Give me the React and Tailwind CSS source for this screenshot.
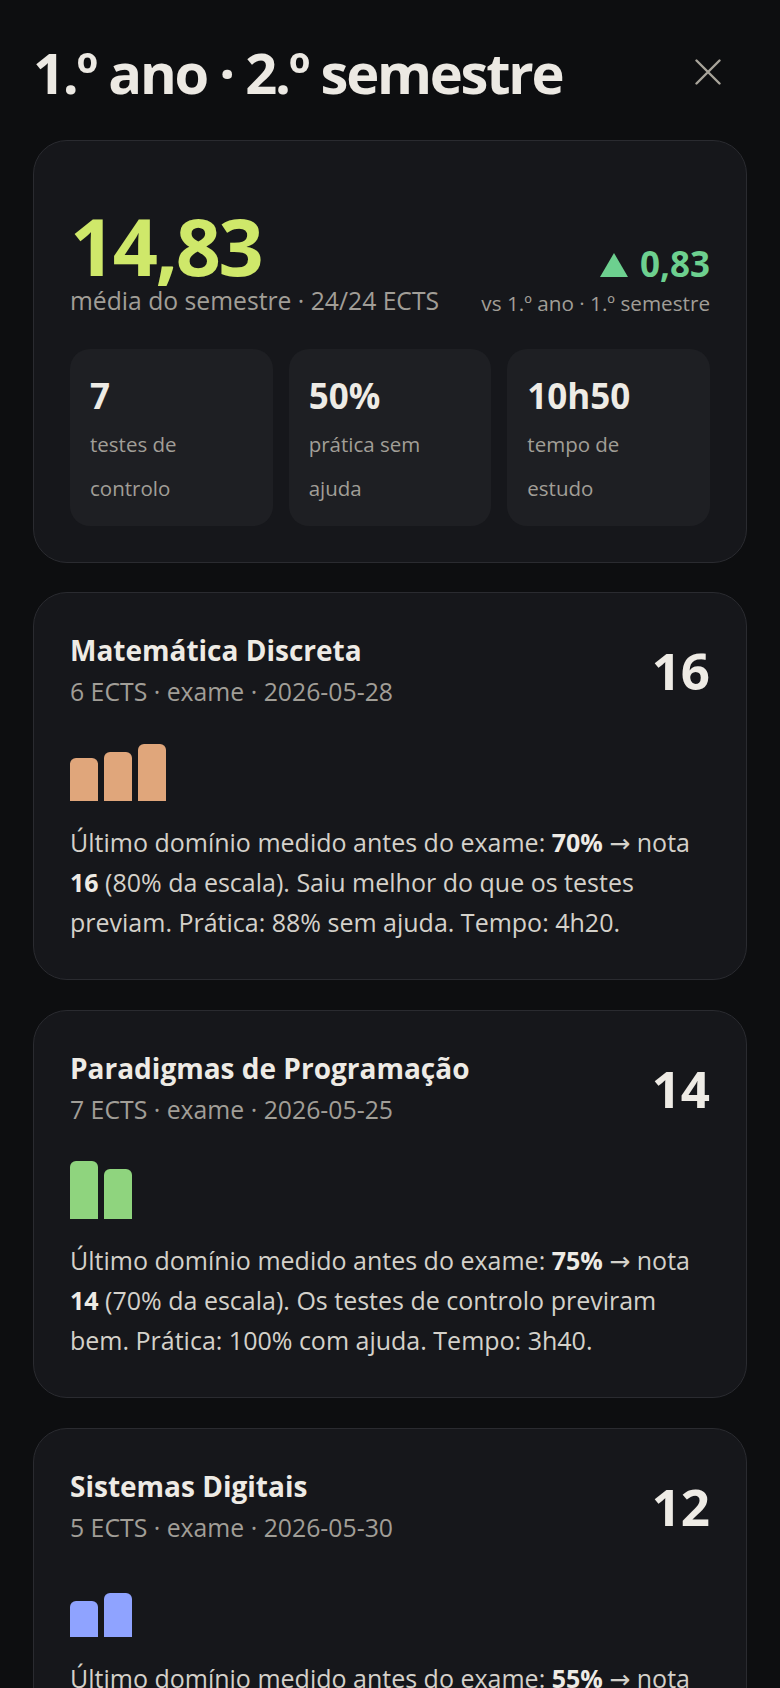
const courses = [
  {
    name: "Matemática Discreta",
    meta: "6 ECTS · exame · 2026-05-28",
    grade: 16,
    color: "bg-[#e0a67b]",
    bars: [43, 49, 57],
    domain: "70%",
    scale: "80%",
    rest: "Saiu melhor do que os testes previam. Prática: 88% sem ajuda. Tempo: 4h20.",
  },
  {
    name: "Paradigmas de Programação",
    meta: "7 ECTS · exame · 2026-05-25",
    grade: 14,
    color: "bg-[#8fd47e]",
    bars: [58, 50],
    domain: "75%",
    scale: "70%",
    rest: "Os testes de controlo previram bem. Prática: 100% com ajuda. Tempo: 3h40.",
  },
  {
    name: "Sistemas Digitais",
    meta: "5 ECTS · exame · 2026-05-30",
    grade: 12,
    color: "bg-[#8fa3ff]",
    bars: [36, 44],
    domain: "55%",
    scale: "60%",
    rest: "Os testes de controlo previram bem. Prática: 40% sem ajuda. Tempo: 2h50.",
  },
];

function Stat({ value, label }) {
  return (
    <div className="rounded-[20px] bg-[#1e1f23] px-5 pt-[25px] pb-[16px]">
      <div className="text-[35px] font-bold leading-[44px] text-[#eeebe5]">{value}</div>
      <div className="mt-[4px] text-[20.5px] leading-[44px] text-[#a19e97]">{label}</div>
    </div>
  );
}

function CourseCard({ course }) {
  return (
    <div className="rounded-[34px] border border-[#2a2b30] bg-[#16171b] px-9 pt-[36px] pb-[37px]">
      <div className="flex items-center justify-between">
        <div>
          <div className="text-[28px] font-bold leading-[42px] text-[#eeebe5]">{course.name}</div>
          <div className="text-[24.8px] leading-[40px] text-[#a19e97]">{course.meta}</div>
        </div>
        <div className="text-[51px] font-bold leading-none text-[#eeebe5]">{course.grade}</div>
      </div>
      <div className="mt-[26px] flex h-[64px] items-end gap-[6px]">
        {course.bars.map((h, i) => (
          <div key={i} className={`w-[28px] rounded-t-[6px] ${course.color}`} style={{ height: h }} />
        ))}
      </div>
      <p className="mt-[21px] text-[25px] leading-[40px] text-[#d4d1ca]">
        Último domínio medido antes do exame: <b className="font-bold text-[#eeebe5]">{course.domain}</b> → nota{" "}
        <b className="font-bold text-[#eeebe5]">{course.grade}</b> ({course.scale} da escala). {course.rest}
      </p>
    </div>
  );
}

export default function App() {
  return (
    <div className="min-h-screen bg-[#0d0e10] px-[33px] pt-[44px] pb-12 font-['Open_Sans','Noto_Sans','DejaVu_Sans',sans-serif]">
      <div className="flex items-start justify-between">
        <h1 className="text-[56px] font-bold leading-none tracking-[-0.04em] text-[#ece9e3]">
          1.º ano · 2.º semestre
        </h1>
        <button className="mt-[15px] mr-[26px]">
          <svg width="26" height="26" viewBox="0 0 26 26" fill="none" stroke="#a8a49a" strokeWidth="2.4" strokeLinecap="round">
            <path d="M1.5 1.5 L24.5 24.5 M24.5 1.5 L1.5 24.5" />
          </svg>
        </button>
      </div>

      <div className="mt-[40px] rounded-[34px] border border-[#2a2b30] bg-[#16171b] p-9">
        <div className="mt-[29px] flex items-end justify-between">
          <div>
            <div className="text-[79px] font-bold leading-none tracking-[-0.03em] text-[#cfe86a]">14,83</div>
            <div className="text-[24.7px] leading-[32px] text-[#a19e97]">média do semestre · 24/24 ECTS</div>
          </div>
          <div className="flex flex-col items-end">
            <div className="flex items-center gap-3 text-[35px] font-bold leading-none text-[#6dd08f]">
              <svg width="28" height="24" viewBox="0 0 28 24" className="mt-[2px]">
                <path d="M14 0 L28 24 L0 24 Z" fill="#6dd08f" />
              </svg>
              0,83
            </div>
            <div className="mt-[8px] text-[20.7px] leading-[28px] text-[#a19e97]">vs 1.º ano · 1.º semestre</div>
          </div>
        </div>
        <div className="mt-[32px] grid grid-cols-3 gap-4">
          <Stat value="7" label={<>testes de<br />controlo</>} />
          <Stat value="50%" label={<>prática sem<br />ajuda</>} />
          <Stat value="10h50" label={<>tempo de<br />estudo</>} />
        </div>
      </div>

      <div className="mt-[29px] flex flex-col gap-[30px]">
        {courses.map((c) => (
          <CourseCard key={c.name} course={c} />
        ))}
      </div>
    </div>
  );
}
